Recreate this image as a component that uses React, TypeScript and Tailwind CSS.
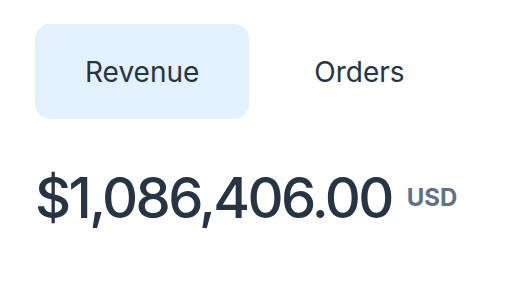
import { useState } from "react";

const tabs = ["Revenue", "Orders"];

export default function App() {
  const [active, setActive] = useState("Revenue");

  return (
    <div className="min-h-screen bg-white pl-[35px] pt-[24px] font-['Inter',sans-serif] text-[#263444]">
      <div className="flex gap-[15px]">
        {tabs.map((tab) => (
          <button
            key={tab}
            onClick={() => setActive(tab)}
            className={
              active === tab
                ? "h-[95px] rounded-[15px] bg-[#e3f1fc] px-[50px] text-[28px] leading-none"
                : "h-[95px] rounded-[15px] px-[50px] text-[28px] leading-none"
            }
          >
            {tab}
          </button>
        ))}
      </div>
      <div className="mt-[51px] flex items-center gap-[15px]">
        <span className="text-[56px] font-medium leading-none tracking-[-0.047em]">$1,086,406.00</span>
        <span className="text-[24px] font-bold leading-none text-[#5f7285]">USD</span>
      </div>
    </div>
  );
}
